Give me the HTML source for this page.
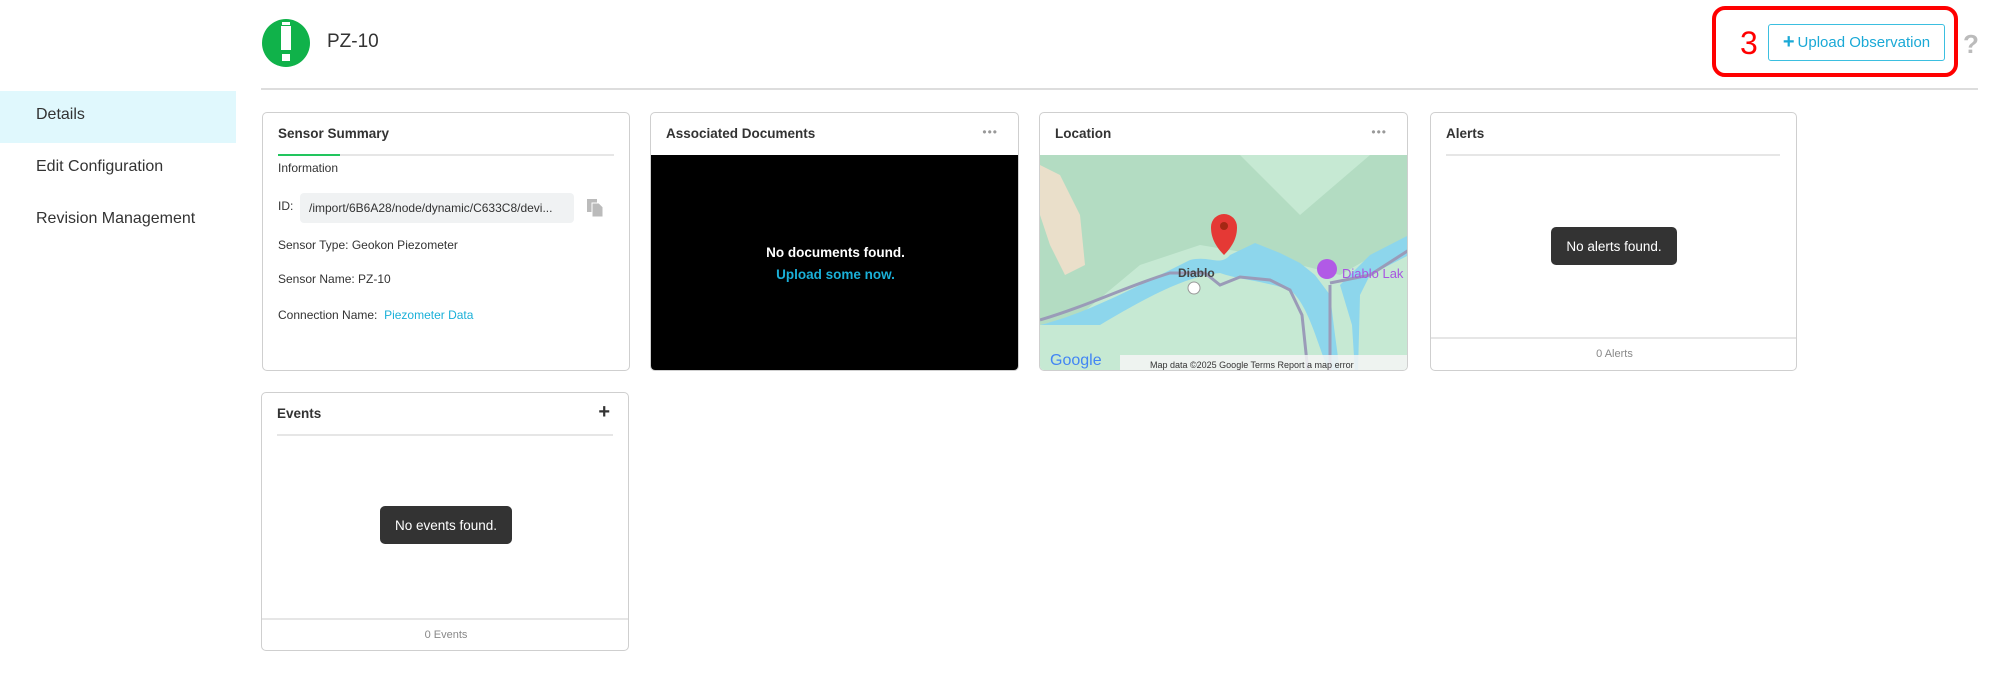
<!DOCTYPE html>
<html><head><meta charset="utf-8"><style>
*{box-sizing:border-box;margin:0;padding:0}
body{width:2000px;height:673px;background:#fff;font-family:"Liberation Sans",Arial,sans-serif;color:#333;position:relative;overflow:hidden}
.abs{position:absolute}
.card{position:absolute;border:1px solid #cfcfcf;border-radius:5px;background:#fff;overflow:hidden}
.title{position:absolute;left:15px;top:13px;font-weight:bold;font-size:13.5px;color:#333}
.line{position:absolute;height:2px;background:#e6e6e6}
.tip{position:absolute;background:#333;color:#fff;font-size:13.5px;border-radius:5px;display:flex;align-items:center;justify-content:center}
.t{position:absolute;font-size:12px;color:#333;white-space:nowrap}
.dots{position:absolute;right:20px;top:12px;color:#999;font-size:12px;letter-spacing:1px}
</style></head><body>
<svg class="abs" style="left:261px;top:18px" width="50" height="50" viewBox="0 0 50 50"><circle cx="25" cy="25" r="24" fill="#10b24a"/><rect x="21" y="4" width="8" height="3" fill="#fff"/><rect x="20" y="8" width="10" height="24" fill="#fff"/><rect x="21" y="36" width="8" height="7" fill="#fff"/></svg>
<div class="abs" style="left:327px;top:31px;font-size:19px;color:#333">PZ-10</div>
<div class="abs" style="left:1712px;top:6px;width:246px;height:71px;border:4px solid #f00;border-radius:13px"></div>
<div class="abs" style="left:1740px;top:25px;font-size:32px;color:#f00">3</div>
<div class="abs" style="left:1768px;top:24px;width:177px;height:37px;border:1px solid #3bbfe0;border-radius:3px;color:#1aa9d6;font-size:15px;display:flex;align-items:center;justify-content:center"><b style="font-size:20px;margin-right:3px">+</b>Upload Observation</div>
<div class="abs" style="left:1963px;top:29px;font-size:26px;font-weight:bold;color:#bbb">?</div>
<div class="abs" style="left:261px;top:88px;width:1717px;height:2px;background:#ddd"></div>
<div class="abs" style="left:0;top:91px;width:236px;height:52px;background:#e0f8fd"></div>
<div class="abs" style="left:36px;top:106px;font-size:16px">Details</div>
<div class="abs" style="left:36px;top:158px;font-size:16px">Edit Configuration</div>
<div class="abs" style="left:36px;top:210px;font-size:16px">Revision Management</div>
<div class="card" style="left:262px;top:112px;width:368px;height:259px">
<div class="title">Sensor Summary</div>
<div class="line" style="left:15px;top:41px;width:336px"></div>
<div class="abs" style="left:15px;top:41px;width:62px;height:2px;background:#22c55e"></div>
<div class="t" style="left:15px;top:48px">Information</div>
<div class="t" style="left:15px;top:86px">ID:</div>
<div class="abs" style="left:37px;top:80px;width:274px;height:30px;background:#f0f2f3;border-radius:4px;font-size:12px;padding:8px 0 0 9px;color:#333">/import/6B6A28/node/dynamic/C633C8/devi...</div>
<svg class="abs" style="left:322px;top:84px" width="20" height="20" viewBox="0 0 20 20"><rect x="2" y="2" width="10" height="13" fill="#bbb"/><path d="M7 6h7l4 4v10H7z" fill="#bbb" stroke="#fff" stroke-width="1"/></svg>
<div class="t" style="left:15px;top:125px">Sensor Type: Geokon Piezometer</div>
<div class="t" style="left:15px;top:159px">Sensor Name: PZ-10</div>
<div class="t" style="left:15px;top:195px">Connection Name:&nbsp; <span style="color:#1ab0d8">Piezometer Data</span></div>
</div>
<div class="card" style="left:650px;top:112px;width:369px;height:259px">
<div class="title">Associated Documents</div><div class="dots">•••</div>
<div class="abs" style="left:0;top:42px;width:369px;height:217px;background:#000;color:#fff;font-weight:bold;font-size:13.5px;text-align:center;padding-top:87px;line-height:22px">No documents found.<br><span style="color:#1ab0d8">Upload some now.</span></div>
</div>
<div class="card" style="left:1039px;top:112px;width:369px;height:259px">
<div class="title">Location</div><div class="dots">•••</div>
<svg class="abs" style="left:0;top:42px" width="369" height="217" viewBox="0 0 369 217">
<rect width="369" height="217" fill="#c6e9d3"/>
<path d="M0 0H200L260 60 330 0H369V80L300 120 220 100 160 90 100 110 40 160 0 170z" fill="#b3dcc2"/>
<path d="M0 10 L20 20 40 60 45 110 25 120 10 90 0 60z" fill="#eadfca"/>
<path d="M0 170 C40 160 80 140 120 120 L150 105 C170 100 180 112 190 100 L215 88 240 98 260 108 275 120 290 140 295 180 300 217 H315 L312 170 300 130 330 100 369 80 V100 L330 120 320 140 318 217 H290 C280 200 270 150 250 135 220 125 200 125 180 118 150 120 110 140 60 170 0 180z" fill="#8dd6ec"/>
<path d="M0 165 C50 150 90 130 130 118 L165 118 180 130 200 122 230 125 250 135 262 160 268 217" fill="none" stroke="#9a9bb8" stroke-width="3"/>
<path d="M290 130 V217 M290 128 L330 120 369 95" fill="none" stroke="#9a9bb8" stroke-width="3"/>
<path d="M184 100 C172 88 171 78 171 72 A13 13 0 0 1 197 72 C197 78 196 88 184 100z" fill="#e53935"/><circle cx="184" cy="71" r="4" fill="#a52714"/>
<text x="138" y="122" font-family="Liberation Sans" font-size="12" font-weight="bold" fill="#444">Diablo</text>
<circle cx="154" cy="133" r="6" fill="#fff" stroke="#999"/>
<circle cx="287" cy="114" r="10" fill="#b15ae6"/>
<text x="302" y="123" font-family="Liberation Sans" font-size="13" fill="#a855e0">Diablo Lak</text>
<text x="10" y="210" font-family="Liberation Sans" font-size="16" fill="#4285f4">Google</text>
<rect x="80" y="200" width="289" height="17" fill="#f5f5f5" opacity="0.85"/>
<text x="110" y="213" font-family="Liberation Sans" font-size="9" fill="#333">Map data ©2025 Google   Terms   Report a map error</text>
</svg>
</div>
<div class="card" style="left:1430px;top:112px;width:367px;height:259px">
<div class="title">Alerts</div>
<div class="line" style="left:15px;top:41px;width:334px"></div>
<div class="tip" style="left:120px;top:114px;width:126px;height:38px">No alerts found.</div>
<div class="line" style="left:0;top:224px;width:367px"></div>
<div class="t" style="left:0;width:367px;text-align:center;top:235px;color:#888;font-size:11px">0 Alerts</div>
</div>
<div class="card" style="left:261px;top:392px;width:368px;height:259px">
<div class="title">Events</div>
<div class="abs" style="right:18px;top:8px;font-size:20px;font-weight:bold">+</div>
<div class="line" style="left:15px;top:41px;width:336px"></div>
<div class="tip" style="left:118px;top:113px;width:132px;height:38px">No events found.</div>
<div class="line" style="left:0;top:225px;width:368px"></div>
<div class="t" style="left:0;width:368px;text-align:center;top:236px;color:#888;font-size:11px">0 Events</div>
</div>
</body></html>
